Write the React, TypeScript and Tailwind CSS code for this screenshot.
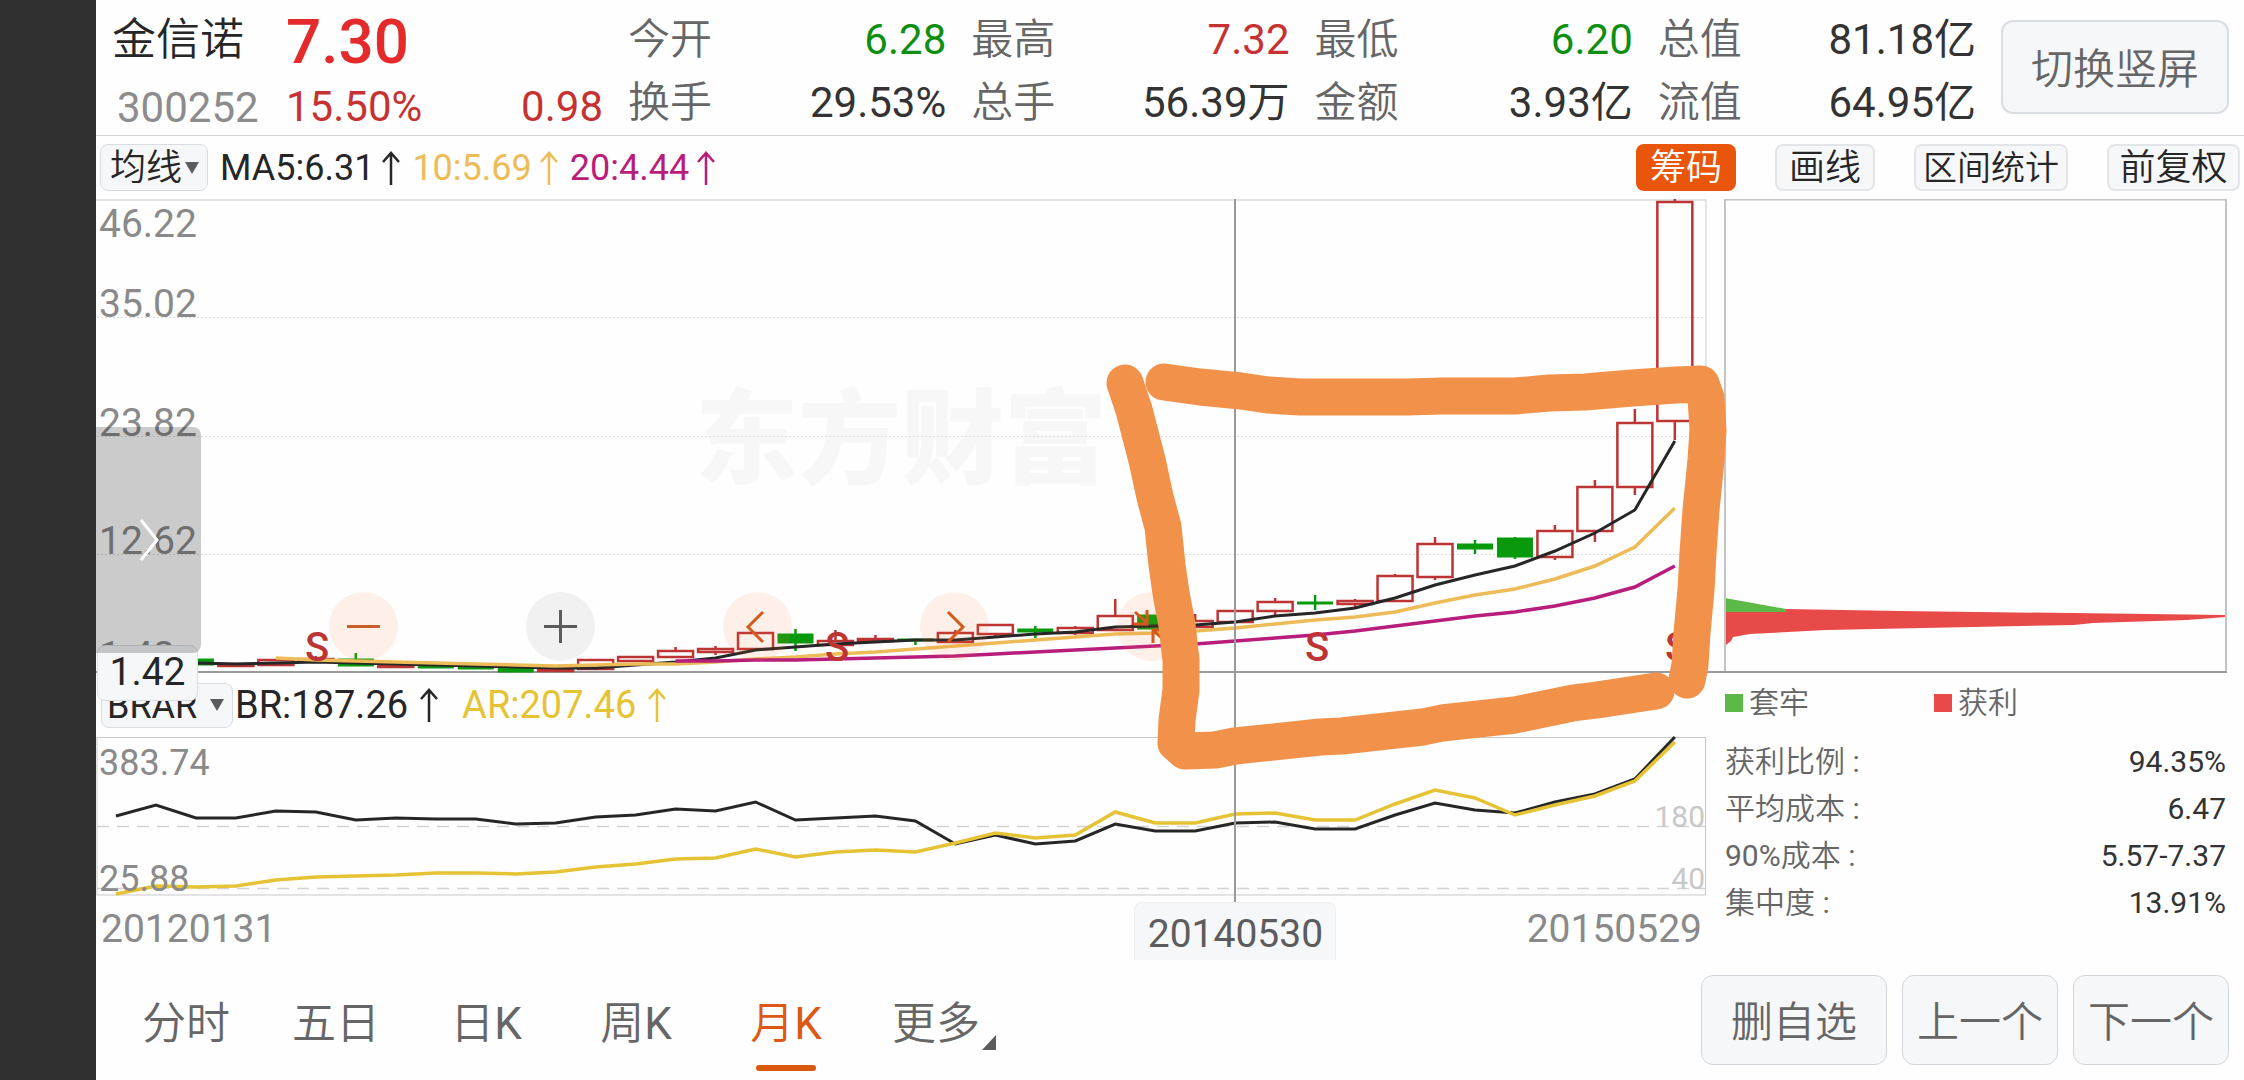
import React from "react";

type Candle = {
  i: number;
  top: number;
  bottom: number;
  high?: number;
  low?: number;
  up: boolean;
};

const X0 = 116;
const STEP = 39.97;
const xAt = (i: number) => X0 + i * STEP;

const candles: Candle[] = [
  { i: 2, top: 659, bottom: 665, up: false },
  { i: 3, top: 664, bottom: 666, up: true },
  { i: 4, top: 660, bottom: 665, up: true },
  { i: 5, top: 659, bottom: 661, high: 656, up: true },
  { i: 6, top: 659, bottom: 666, high: 653, up: false },
  { i: 7, top: 665, bottom: 667, up: true },
  { i: 8, top: 665, bottom: 668, up: false },
  { i: 9, top: 667, bottom: 669, up: false },
  { i: 10, top: 668, bottom: 672, up: false },
  { i: 11, top: 669, bottom: 671, up: true },
  { i: 12, top: 660, bottom: 669, up: true },
  { i: 13, top: 657, bottom: 661, up: true },
  { i: 14, top: 651, bottom: 657, high: 647, up: true },
  { i: 15, top: 649, bottom: 652, high: 646, low: 655, up: true },
  { i: 16, top: 633, bottom: 649, up: true },
  { i: 17, top: 634, bottom: 643, high: 629, low: 651, up: false },
  { i: 18, top: 641, bottom: 645, high: 630, up: true },
  { i: 19, top: 639, bottom: 641, high: 635, up: true },
  { i: 20, top: 639, bottom: 641, low: 645, up: false },
  { i: 21, top: 633, bottom: 642, high: 630, up: true },
  { i: 22, top: 625, bottom: 634, low: 638, up: true },
  { i: 23, top: 629, bottom: 632, high: 626, low: 638, up: false },
  { i: 24, top: 628, bottom: 633, high: 626, low: 635, up: true },
  { i: 25, top: 616, bottom: 630, high: 599, up: true },
  { i: 26, top: 615, bottom: 629, up: false },
  { i: 27, top: 621, bottom: 627, high: 614, up: true },
  { i: 28, top: 611, bottom: 622, up: true },
  { i: 29, top: 602, bottom: 611, high: 598, low: 615, up: true },
  { i: 30, top: 602, bottom: 604, high: 595, low: 610, up: false },
  { i: 31, top: 601, bottom: 604, high: 599, low: 607, up: true },
  { i: 32, top: 576, bottom: 601, high: 574, up: true },
  { i: 33, top: 544, bottom: 577, high: 537, low: 580, up: true },
  { i: 34, top: 544, bottom: 549, high: 540, low: 554, up: false },
  { i: 35, top: 538, bottom: 557, high: 537, low: 559, up: false },
  { i: 36, top: 531, bottom: 557, high: 525, low: 560, up: true },
  { i: 37, top: 487, bottom: 531, high: 480, low: 542, up: true },
  { i: 38, top: 423, bottom: 487, high: 409, low: 495, up: true },
  { i: 39, top: 202, bottom: 421, high: 199, low: 440, up: true },
];

const ma5 = [
  663, 664, 663, 662, 663, 664, 665, 666, 667, 668, 668, 665, 662, 658, 650, 647, 644, 642, 640, 640, 637, 634, 632,
  627, 626, 625, 622, 616, 613, 608, 598, 585, 575, 566, 551, 533, 510, 441,
];
const ma10 = [
  658, 660, 661, 662, 663, 664, 665, 666, 665, 664, 664, 662, 659, 657, 654, 652, 649, 646, 643, 640, 637, 634, 633,
  631, 628, 624, 620, 617, 612, 603, 595, 589, 579, 566, 547, 508,
];
const ma20 = [
  661, 661, 660, 660, 659, 658, 657, 656, 654, 652, 650, 648, 646, 644, 641, 638, 635, 631, 626, 621, 616, 612, 606,
  598, 587, 566,
];
const br = [
  816, 805, 818, 818, 811, 812, 820, 818, 819, 819, 824, 823, 817, 815, 809, 811, 802, 820, 818, 816, 821, 844, 835,
  844, 841, 824, 831, 831, 823, 822, 829, 829, 815, 803, 810, 813, 802, 794, 779, 737,
];
const ar = [
  894, 886, 887, 886, 880, 877, 876, 875, 873, 873, 874, 872, 867, 864, 859, 858, 849, 857, 852, 850, 852, 843, 833,
  838, 835, 812, 823, 823, 814, 813, 820, 820, 804, 790, 798, 815, 805, 796, 781, 742,
];

const toPoints = (ys: number[], start: number) => ys.map((y, k) => `${xAt(start + k)},${y}`).join(" ");

const RED = "#bd3434";
const GREEN = "#089a0c";

const stats = [
  { label: "今开", value: "6.28", tone: "text-[#0f8f12]" },
  { label: "最高", value: "7.32", tone: "text-[#c63232]" },
  { label: "最低", value: "6.20", tone: "text-[#0f8f12]" },
  { label: "总值", value: "81.18亿", tone: "text-[#333]" },
  { label: "换手", value: "29.53%", tone: "text-[#333]" },
  { label: "总手", value: "56.39万", tone: "text-[#333]" },
  { label: "金额", value: "3.93亿", tone: "text-[#333]" },
  { label: "流值", value: "64.95亿", tone: "text-[#333]" },
];

function UpArrow() {
  return (
    <svg width="18" height="34" viewBox="0 0 18 34" fill="none" stroke="currentColor" strokeWidth="2.5" aria-hidden="true">
      <path d="M9 34V2M1 11L9 2l8 9" />
    </svg>
  );
}

function Picker({ label, box, arrow }: { label: string; box: string; arrow: string }) {
  return (
    <span className="relative flex items-center">
      <select
        aria-label={label}
        className={`appearance-none rounded-lg border border-[#d9dce0] bg-[#f6f7f9] text-4xl/[44px] text-[#262626] ${box}`}
      >
        <option>{label}</option>
      </select>
      <svg className={`pointer-events-none absolute ${arrow}`} width="14" height="12" viewBox="0 0 14 12" aria-hidden="true">
        <path d="M0 0h14L7 12z" fill="#5c5c5c" />
      </svg>
    </span>
  );
}

function Header() {
  return (
    <header className="flex h-[136px] border-b border-[#d6d6d6]">
      <div className="grid w-[507px] shrink-0 grid-cols-[190px_1fr] grid-rows-[72px_60px] content-start pt-[5px]">
        <h1 className="pl-4 text-[44px]/[70px] font-[350] text-[#262626]">金信诺</h1>
        <strong className="text-[62px]/[73px] font-medium text-[#e42a2a]">7.30</strong>
        <span className="pl-[21px] text-[42px]/[62px] text-[#8c8c8c]">300252</span>
        <span className="flex justify-between text-[42px]/[60px] text-[#c63232]">
          <span>15.50%</span>
          <span>0.98</span>
        </span>
      </div>
      <dl className="ml-[25px] grid flex-1 grid-cols-4 grid-rows-[63px_63px] gap-x-[25px] pt-2 text-[42px]/[63px]">
        {stats.map((s) => (
          <div key={s.label} className="flex justify-between">
            <dt className="font-[350] text-[#666]">{s.label}</dt>
            <dd className={s.tone}>{s.value}</dd>
          </div>
        ))}
      </dl>
      <button
        type="button"
        className="mt-5 mr-[15px] ml-[25px] h-[94px] w-[228px] shrink-0 rounded-xl border-2 border-[#dadde1] bg-[#f6f7f9] pt-1 text-[42px] font-[350] text-[#666]"
      >
        切换竖屏
      </button>
    </header>
  );
}

function Toolbar() {
  return (
    <div className="flex h-[63px] items-center pr-1 pl-1 text-4xl/[44px]">
      <Picker label="均线" box="h-[47px] w-[108px] pl-[9px] font-[350]" arrow="right-[9px]" />
      <span className="ml-3 flex items-center gap-2 text-[#262626]">
        MA5:6.31 <UpArrow />
      </span>
      <span className="ml-3 flex items-center gap-2 text-[#edbb57]">
        10:5.69 <UpArrow />
      </span>
      <span className="ml-3 flex items-center gap-2 text-[#b81d7c]">
        20:4.44 <UpArrow />
      </span>
      <div className="ml-auto flex h-[47px] gap-[39px] font-[350] text-[#262626]">
        <button type="button" className="w-[100px] rounded-lg bg-[#e9560b] text-white">
          筹码
        </button>
        <button type="button" className="w-[100px] rounded-lg border-2 border-[#e3e5e8] bg-[#f6f7f9]">
          画线
        </button>
        <button type="button" className="w-[154px] rounded-lg border-2 border-[#e3e5e8] bg-[#f6f7f9] text-[34px]">
          区间统计
        </button>
        <button type="button" className="w-[133px] rounded-lg border-2 border-[#e3e5e8] bg-[#f6f7f9]">
          前复权
        </button>
      </div>
    </div>
  );
}

const roundTools = [
  { name: "缩小", bg: "bg-[#ff7832]/10", ink: "text-[#c9602a]", d: "M18 34.500H51" },
  { name: "放大", bg: "bg-black/5", ink: "text-[#5c5c5c]", d: "M18 34.500H51M34.500 18V51" },
  { name: "左移", bg: "bg-[#ff7832]/10", ink: "text-[#d4591c]", d: "M40 20L25 35L40 50" },
  { name: "右移", bg: "bg-[#ff7832]/10", ink: "text-[#d4591c]", d: "M28 20L43 35L28 50" },
  {
    name: "收起",
    bg: "bg-[#ff7832]/10",
    ink: "text-[#d4591c]",
    d: "M18 20L30 31M30 18V32H17M36 51V38H50M37 39L50 51",
  },
];

function MainChart() {
  return (
    <div className="relative">
      <svg viewBox="96 199 1610 474" className="block h-auto w-full overflow-visible" fill="none" role="img" aria-label="月K线">
        <text
          x="901"
          y="476"
          fontSize="103"
          textAnchor="middle"
          fill="#f7f7f7"
          className="font-['Noto_Sans_CJK_SC',sans-serif] font-black"
        >
          东方财富
        </text>
        <g stroke="#dcdcdc" strokeWidth="1" strokeDasharray="2 2">
          <path d="M97 317.500H1706M97 436.500H1706M97 554.500H1706" />
        </g>
        <path d="M96 200H1706V672" stroke="#e4e4e4" strokeWidth="2" />
        <path d="M96 672H1725" stroke="#9a9a9a" strokeWidth="2" />
        {candles.map((c) => {
          const x = xAt(c.i);
          const color = c.up ? RED : GREEN;
          return (
            <g key={c.i} stroke={color} strokeWidth="2.5">
              {c.high !== undefined && <path d={`M${x} ${c.high}V${c.top}`} />}
              {c.low !== undefined && <path d={`M${x} ${c.bottom}V${c.low}`} />}
              <rect
                x={x - 17.5}
                y={c.top}
                width="35"
                height={Math.max(c.bottom - c.top, 1)}
                fill={c.up ? "none" : color}
                strokeWidth={c.up ? 2.5 : 1}
              />
            </g>
          );
        })}
        <polyline points={toPoints(ma5, 2)} stroke="#262626" strokeWidth="3" />
        <polyline points={toPoints(ma10, 4)} stroke="#edbb57" strokeWidth="3.500" />
        <polyline points={toPoints(ma20, 14)} stroke="#b81d7c" strokeWidth="3.500" />
        <g fill={RED} fontSize="40" textAnchor="middle" className="font-medium">
          <text x="317" y="661">S</text>
          <text x="837" y="661">S</text>
          <text x="1317" y="661">S</text>
          <text x="1677" y="661">S</text>
        </g>
        <g fill="#8a8a8a" fontSize="39">
          <text x="99" y="237">46.22</text>
          <text x="99" y="317">35.02</text>
          <text x="99" y="436">23.82</text>
          <text x="99" y="554">12.62</text>
          <text x="99" y="669">1.42</text>
        </g>
      </svg>
      <div className="absolute bottom-3 left-[233px] flex gap-32">
        {roundTools.map((t) => (
          <button
            key={t.name}
            type="button"
            aria-label={t.name}
            className={`size-[69px] rounded-full ${t.bg} ${t.ink}`}
          >
            <svg viewBox="0 0 69 69" className="size-full" fill="none" stroke="currentColor" strokeWidth="3" aria-hidden="true">
              <path d={t.d} />
            </svg>
          </button>
        ))}
      </div>
      <output className="absolute -bottom-7 left-px z-10 h-14 w-[101px] rounded-lg border border-[#d9dce0] bg-[#f6f7f9] text-center text-[39px]/[52px] text-[#262626]">
        1.42
      </output>
      <button
        type="button"
        aria-label="展开"
        className="absolute bottom-5 left-0 z-20 h-[226px] w-[105px] rounded-r-lg bg-black/20"
      >
        <svg className="ml-[43px]" width="20" height="42" viewBox="0 0 20 42" fill="none" stroke="white" strokeWidth="3" aria-hidden="true">
          <path d="M2 1L18 21L2 41" />
        </svg>
      </button>
    </div>
  );
}

function SubChart() {
  return (
    <svg viewBox="96 737 1610 159" className="block h-auto w-full overflow-visible" fill="none" role="img" aria-label="BRAR">
      <path d="M97 826.500H1706M97 888.500H1706" stroke="#d2d2d2" strokeWidth="1.500" strokeDasharray="12 8" />
      <rect x="97" y="737.500" width="1608.500" height="157.500" stroke="#c9c9c9" />
      <g fill="#c8c8c8" fontSize="30" textAnchor="end">
        <text x="1705" y="827">180</text>
        <text x="1705" y="889">40</text>
      </g>
      <polyline points={toPoints(br, 0)} stroke="#262626" strokeWidth="3" />
      <polyline points={toPoints(ar, 0)} stroke="#e6c235" strokeWidth="3.500" />
      <g fill="#8a8a8a" fontSize="36">
        <text x="99" y="775">383.74</text>
        <text x="99" y="891">25.88</text>
      </g>
    </svg>
  );
}

function Markup() {
  return (
    <svg
      viewBox="96 199 1610 474"
      className="pointer-events-none absolute top-0 left-0 z-10 h-auto w-full overflow-visible"
      fill="none"
      aria-hidden="true"
    >
      <path d="M1235 199V902" stroke="#9a9a9a" strokeWidth="2" />
      <g stroke="#f2924a" strokeWidth="37" strokeLinecap="round" strokeLinejoin="round">
        <path d="M1125 383L1134 410L1147 460L1155 497L1163 527L1167 565L1171 593L1177 625L1181 660V690L1177 720L1176 743L1185 751L1215 750L1235 746L1320 737L1342 736L1423 727L1442 723L1515 715L1573 703L1597 700L1656 691" />
        <path d="M1164 382L1200 387L1241 391L1268 395L1300 397H1407L1442 396H1515L1549 393L1585 392L1632 388L1676 385L1701 384L1706 398L1708 430L1706 460L1701 510L1698 553L1696 590L1692 633L1690 665L1687 680" />
      </g>
    </svg>
  );
}

const chipStats = [
  { prefix: "", label: "获利比例", value: "94.35%" },
  { prefix: "", label: "平均成本", value: "6.47" },
  { prefix: "90%", label: "成本", value: "5.57-7.37" },
  { prefix: "", label: "集中度", value: "13.91%" },
];

function ChipPanel() {
  return (
    <aside className="mr-[17px] ml-[18px] w-[503px] shrink-0 text-3xl">
      <svg viewBox="1724 199 503 474" className="block h-auto w-full" role="img" aria-label="筹码分布">
        <path d="M1725 598L1786 609V612H1725z" fill="#5cb947" />
        <path
          d="M1725 612H1786V609L1900 611L2226 615V617L2187 620L2093 623L2074 625L1826 630L1750 634L1733 637L1731 641L1726 645L1725 655z"
          fill="#e84a4a"
        />
        <path d="M1725 672V199.500H2226V672" fill="none" stroke="#c4c4c4" strokeWidth="2" />
        <path d="M1724 672H2227" stroke="#9a9a9a" strokeWidth="2" />
      </svg>
      <ul className="flex pb-[5px] pl-px leading-[60px] font-[350] text-[#666]">
        <li className="flex w-[209px] items-center gap-1.5">
          <i className="h-[18px] w-[18px] bg-[#5cb947]" />
          套牢
        </li>
        <li className="flex items-center gap-1.5">
          <i className="h-[18px] w-[18px] bg-[#e84a4a]" />
          获利
        </li>
      </ul>
      <dl className="pr-px pl-px leading-[47px]">
        {chipStats.map((s) => (
          <div key={s.label} className="flex justify-between">
            <dt className="text-[#666]">
              {s.prefix}
              <span className="font-[350]">{s.label}</span> :
            </dt>
            <dd className="text-[#333]">{s.value}</dd>
          </div>
        ))}
      </dl>
    </aside>
  );
}

const tabs = [
  { cjk: "分时" },
  { cjk: "五日" },
  { cjk: "日", latin: "K" },
  { cjk: "周", latin: "K" },
  { cjk: "月", latin: "K", active: true },
  { cjk: "更多", more: true },
];

function Footer() {
  return (
    <footer className="flex h-[120px] items-start justify-between pt-[15px] pr-[15px] pl-[15px] text-[#666]">
      <nav className="flex">
        {tabs.map((t) => (
          <button
            key={t.cjk}
            type="button"
            className={`relative flex h-24 w-[150px] justify-center text-[44px]/[98px] ${t.active ? "text-[#dd5815]" : ""}`}
          >
            <span className="font-[350]">{t.cjk}</span>
            {t.latin}
            {t.active && <span className="absolute bottom-0 h-1.5 w-[60px] rounded-full bg-[#d9590f]" />}
            {t.more && (
              <svg className="absolute right-[15px] bottom-[21px]" width="14" height="15" viewBox="0 0 14 15" aria-hidden="true">
                <path d="M14 0V15H0z" fill="#5c5c5c" />
              </svg>
            )}
          </button>
        ))}
      </nav>
      <div className="flex gap-[15px] text-[42px] font-[350]">
        <button type="button" className="h-[90px] w-[186px] rounded-xl border border-[#d3d6da] bg-[#f6f7f9] pt-1">
          删自选
        </button>
        <button type="button" className="h-[90px] w-[156px] rounded-xl border border-[#d3d6da] bg-[#f6f7f9] pt-1">
          上一个
        </button>
        <button type="button" className="h-[90px] w-[156px] rounded-xl border border-[#d3d6da] bg-[#f6f7f9] pt-1">
          下一个
        </button>
      </div>
    </footer>
  );
}

export default function App() {
  return (
    <div className="flex min-h-screen bg-[#303030] font-[Roboto,'Noto_Sans_CJK_SC',sans-serif]">
      <div className="w-24 shrink-0" />
      <main className="min-w-0 flex-1 bg-[#fefefe]">
        <Header />
        <Toolbar />
        <div className="flex items-start">
          <section className="relative min-w-0 flex-1">
            <MainChart />
            <div className="flex h-16 items-center pl-[5px] text-[38px]/[44px]">
              <Picker label="BRAR" box="h-[45px] w-[132px] pl-[5px]" arrow="right-[9px]" />
              <span className="ml-0.5 flex items-center gap-3 text-[#262626]">
                BR:187.26 <UpArrow />
              </span>
              <span className="ml-6 flex items-center gap-3 text-[#e6c235]">
                AR:207.46 <UpArrow />
              </span>
            </div>
            <SubChart />
            <div className="relative flex h-16 justify-between pr-1 pl-[5px] text-[39px]/[66px] text-[#8a8a8a]">
              <time>20120131</time>
              <time>20150529</time>
              <output className="absolute bottom-0 left-[64.5%] h-[58px] w-[202px] rounded-t-lg border border-b-0 border-[#eceef0] bg-[#f6f7f9] text-center leading-[62px] text-[#5c5c5c]">
                20140530
              </output>
            </div>
            <Markup />
          </section>
          <ChipPanel />
        </div>
        <Footer />
      </main>
    </div>
  );
}
